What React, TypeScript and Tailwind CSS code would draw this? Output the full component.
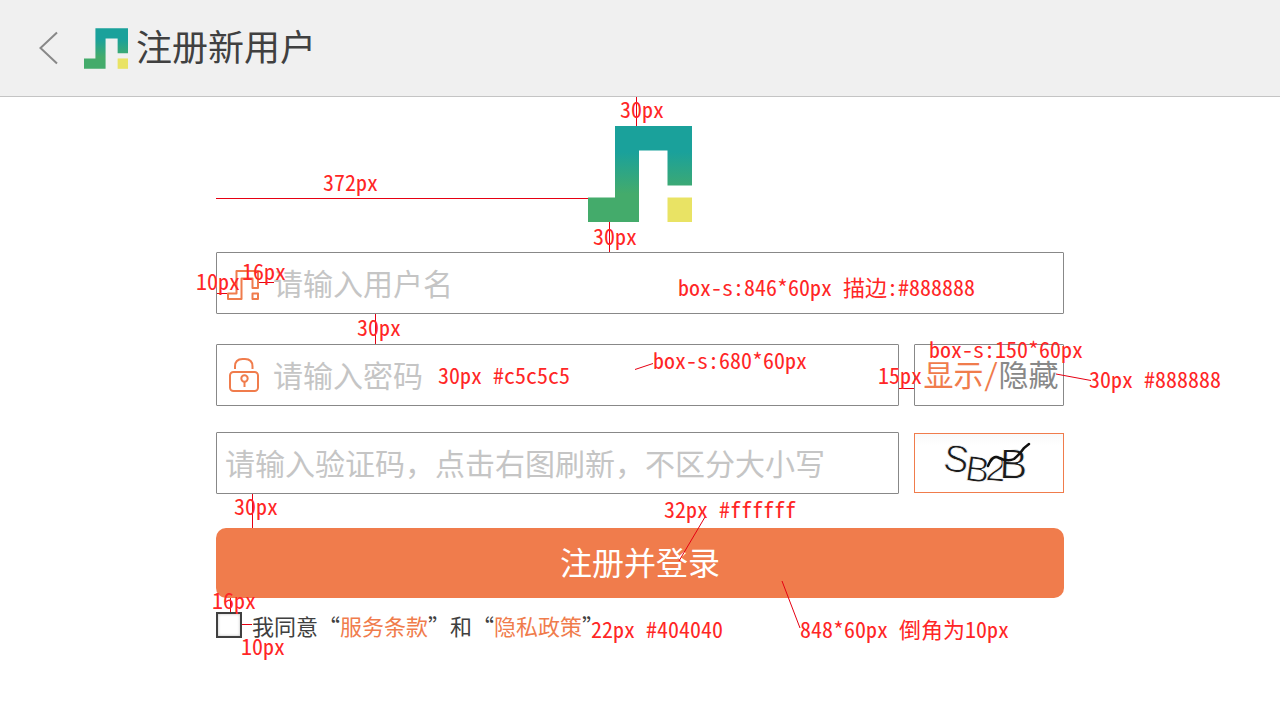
import type { ReactNode } from 'react';

type Note = { text: string; className: string };

const notes: Note[] = [
  { text: '30px', className: 'left-[404px] top-0' },
  { text: '372px', className: 'left-[107px] top-[73px]' },
  { text: '30px', className: 'left-[377px] top-[127px]' },
  { text: '10px', className: '-left-[20px] top-[172px]' },
  { text: '16px', className: 'left-[26px] top-[162px]' },
  { text: 'box-s:846*60px 描边:#888888', className: 'left-[462px] top-[178px]' },
  { text: '30px', className: 'left-[141px] top-[218px]' },
  { text: '30px #c5c5c5', className: 'left-[222px] top-[266px]' },
  { text: 'box-s:680*60px', className: 'left-[437px] top-[251px]' },
  { text: '15px', className: 'left-[662px] top-[266px]' },
  { text: 'box-s:150*60px', className: 'left-[713px] top-[240px]' },
  { text: '30px #888888', className: 'left-[873px] top-[270px]' },
  { text: '30px', className: 'left-[18px] top-[397px]' },
  { text: '32px #ffffff', className: 'left-[448px] top-[400px]' },
  { text: '16px', className: '-left-[4px] top-[491px]' },
  { text: '10px', className: 'left-[25px] top-[537px]' },
  { text: '22px #404040', className: 'left-[375px] top-[520px]' },
  { text: '848*60px 倒角为10px', className: 'left-[584px] top-[520px]' },
];

function Logo({ id, className }: { id: string; className: string }) {
  return (
    <svg viewBox="0 0 104 96" className={className} aria-hidden="true">
      <defs>
        <linearGradient id={id} gradientUnits="userSpaceOnUse" x1="0" y1="26" x2="0" y2="68">
          <stop offset="0" stopColor="#1aa19b" />
          <stop offset="1" stopColor="#44ab6b" />
        </linearGradient>
      </defs>
      <path d="M27 0H104V59.5H79.5V24.5H51V96H0V71.5H27Z" fill={`url(#${id})`} />
      <path d="M79.5 71.5H104V96H79.5Z" fill="#e9e364" />
    </svg>
  );
}

function UserIcon() {
  return (
    <svg viewBox="0 0 32 30" className="mt-1 h-[30px] w-8 shrink-0" fill="none" stroke="#f07c4c" strokeWidth="2" strokeLinejoin="round" aria-hidden="true">
      <path d="M1 23.5H9.5V1H31V18H25.5V8.5H14.5V29H1Z" />
      <path d="M25.5 23.5H31V29H25.5Z" />
    </svg>
  );
}

function LockIcon() {
  return (
    <svg viewBox="0 0 32 34" className="h-[34px] w-8 shrink-0" fill="none" stroke="#f07c4c" strokeWidth="2" aria-hidden="true">
      <rect x="3" y="14" width="28" height="19" rx="3.5" />
      <path d="M8 11V8.5Q8 1 15.5 1H18Q25.500 1 25.500 8.500V11" />
      <circle cx="17.500" cy="20.500" r="3.200" />
      <path d="M17.500 23.500V29" />
    </svg>
  );
}

function Captcha() {
  return (
    <svg viewBox="0 0 148 58" className="h-full w-full" aria-label="SB2B" role="img">
      <g fill="#1c1c1c" stroke="#ffffff" strokeWidth="0.8" fontFamily="'Liberation Sans', sans-serif">
        <text transform="translate(27 36) rotate(8)" fontSize="38">S</text>
        <text transform="translate(49 46) rotate(8)" fontSize="36">B</text>
        <text transform="translate(70 46) rotate(5)" fontSize="36">2</text>
        <text transform="translate(84 44) rotate(2)" fontSize="42">B</text>
      </g>
      <path d="M73 32Q78 20 84 24Q93 28 99 25Q105 20 109 14L114 10" fill="none" stroke="#111" strokeWidth="2.500" strokeLinecap="round" />
    </svg>
  );
}

function Guides() {
  return (
    <svg width="848" height="580" className="absolute left-0 top-0 overflow-visible" stroke="#e60012" strokeWidth="1" aria-hidden="true">
      <path
        shapeRendering="crispEdges"
        d="M420.500 0V29M0 101.500H372M393.500 125V155M1 196.500H11M43 185.500H58M159.500 217V247M683 291.500H698M36.500 397V431M14.500 501V515M26 527.500H36"
        fill="none"
      />
      <path d="M419 272.500L437 266.500M840 277L875 283.500M489 420L463 464M566 484L584 531" fill="none" />
    </svg>
  );
}

function Field({ id, label, placeholder, type = 'text', className, icon }: {
  id: string;
  label: string;
  placeholder: string;
  type?: string;
  className: string;
  icon?: ReactNode;
}) {
  return (
    <label htmlFor={id} className={`flex h-[62px] items-center rounded-[1px] border border-[#888888] ${className}`}>
      {icon}
      <input
        id={id}
        type={type}
        aria-label={label}
        placeholder={placeholder}
        className="h-full min-w-0 flex-1 bg-transparent pb-0.5 text-[30px] text-[#404040] outline-none placeholder:text-[#c5c5c5] placeholder:opacity-100"
      />
    </label>
  );
}

export default function App() {
  return (
    <div className="min-h-screen overflow-x-hidden bg-white font-['Noto_Sans_Mono_CJK_SC','Noto_Sans_CJK_SC',sans-serif] text-[#404040]">
      <header className="flex h-[97px] items-center border-b border-[#c4c4c4] bg-[#f0f0f0] pl-[38px]">
        <button type="button" aria-label="返回" className="flex h-10 w-[46px] items-center">
          <svg viewBox="0 0 20 34" className="h-[34px] w-5" fill="none" stroke="#888888" strokeWidth="2" aria-hidden="true">
            <path d="M19 1.500L2.500 17L19 32.500" />
          </svg>
        </button>
        <Logo id="logo-small" className="h-[41px] w-11" />
        <h1 className="ml-2 pb-1.5 text-4xl">注册新用户</h1>
      </header>

      <main className="relative mx-auto w-full max-w-[848px] pt-[29px]">
        <Logo id="logo-large" className="mx-auto h-24 w-[104px]" />

        <form className="mt-[30px]" onSubmit={(e) => e.preventDefault()}>
          <Field id="username" label="用户名" placeholder="请输入用户名" className="gap-[14px] pl-2.5" icon={<UserIcon />} />

          <div className="mt-[30px] flex gap-[15px]">
            <Field id="password" label="密码" type="password" placeholder="请输入密码" className="flex-1 gap-[14px] pl-2.5" icon={<LockIcon />} />
            <button type="button" className="h-[62px] w-[150px] whitespace-nowrap rounded-[1px] border border-[#888888] pb-1 pl-1 text-[30px] text-[#888888]">
              <span className="text-[#f07c4c]">显示/</span>隐藏
            </button>
          </div>

          <div className="mt-[26px] flex items-center gap-[15px]">
            <Field id="captcha" label="验证码" placeholder="请输入验证码，点击右图刷新，不区分大小写" className="flex-1 pl-2" />
            <button type="button" aria-label="刷新验证码" className="h-[60px] w-[150px] border border-[#f07c4c] bg-linear-to-b from-[#f9f9f9] to-white to-20%">
              <Captcha />
            </button>
          </div>

          <button type="submit" className="mt-[34px] h-[70px] w-full rounded-[10px] bg-[#f07c4c] pb-1 text-[32px] text-white">
            注册并登录
          </button>

          <div className="mt-3.5 flex items-center gap-2.5 text-[22px] leading-[26px]">
            <input
              id="agree"
              type="checkbox"
              className="size-[26px] shrink-0 appearance-none border-2 border-[#404040] bg-white shadow-[inset_0_0_3px_#bbbbbb] checked:bg-[#f07c4c]"
            />
            <label htmlFor="agree" className="whitespace-nowrap">
              我同意“<a href="#terms" className="text-[#f07c4c]">服务条款</a>”和“<a href="#privacy" className="text-[#f07c4c]">隐私政策</a>”
            </label>
          </div>
        </form>

        <div className="pointer-events-none absolute left-0 top-0 w-full">
          <Guides />
          {notes.map((note) => (
            <span key={note.className} className={`absolute whitespace-nowrap text-[22px] leading-[22px] text-[#ff2626] ${note.className}`}>
              {note.text}
            </span>
          ))}
        </div>
      </main>
    </div>
  );
}
